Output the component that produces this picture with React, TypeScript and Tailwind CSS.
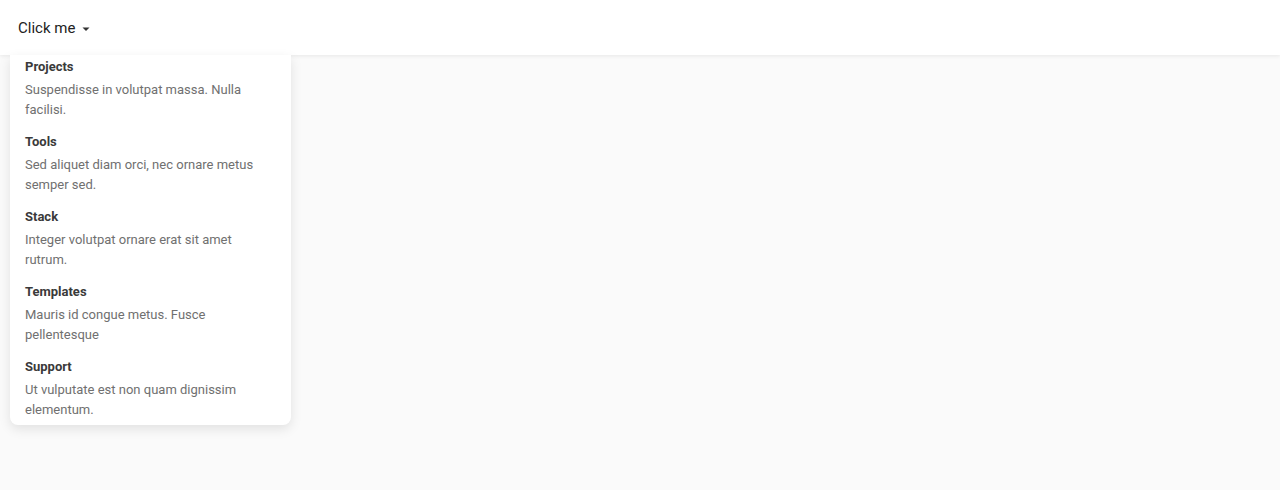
import React from 'react';

const items = [
  { title: 'Projects', description: 'Suspendisse in volutpat massa. Nulla facilisi.' },
  { title: 'Tools', description: 'Sed aliquet diam orci, nec ornare metus semper sed.' },
  { title: 'Stack', description: 'Integer volutpat ornare erat sit amet rutrum.' },
  { title: 'Templates', description: 'Mauris id congue metus. Fusce pellentesque' },
  { title: 'Support', description: 'Ut vulputate est non quam dignissim elementum.' },
];

export default function App() {
  return (
    <div className="min-h-[490px] bg-[#fafafa] font-['Roboto',sans-serif]">
      <header className="relative z-10 h-[55px] bg-white shadow-[0_1px_4px_rgba(0,0,0,0.08)] flex items-center px-[18px] pt-[2px]">
        <button className="flex items-center text-[15px] text-[#222] leading-none">
          Click me
          <svg width="10" height="10" viewBox="0 0 10 10" className="ml-[6px]">
            <path d="M1.5 3.5h7L5 7z" fill="#333" />
          </svg>
        </button>
      </header>

      <div className="relative z-20 ml-[10px] w-[281px] bg-white rounded-b-[8px] shadow-[0_4px_12px_rgba(0,0,0,0.1)] pt-[2px] pb-[5px] px-[15px] flex flex-col gap-[12px]">
        {items.map((item) => (
          <div key={item.title}>
            <h3 className="text-[13px] leading-[20px] font-bold text-[#3a3a3a]">{item.title}</h3>
            <p className="mt-[3px] text-[13px] leading-[20px] text-[#707070]">{item.description}</p>
          </div>
        ))}
      </div>
    </div>
  );
}
